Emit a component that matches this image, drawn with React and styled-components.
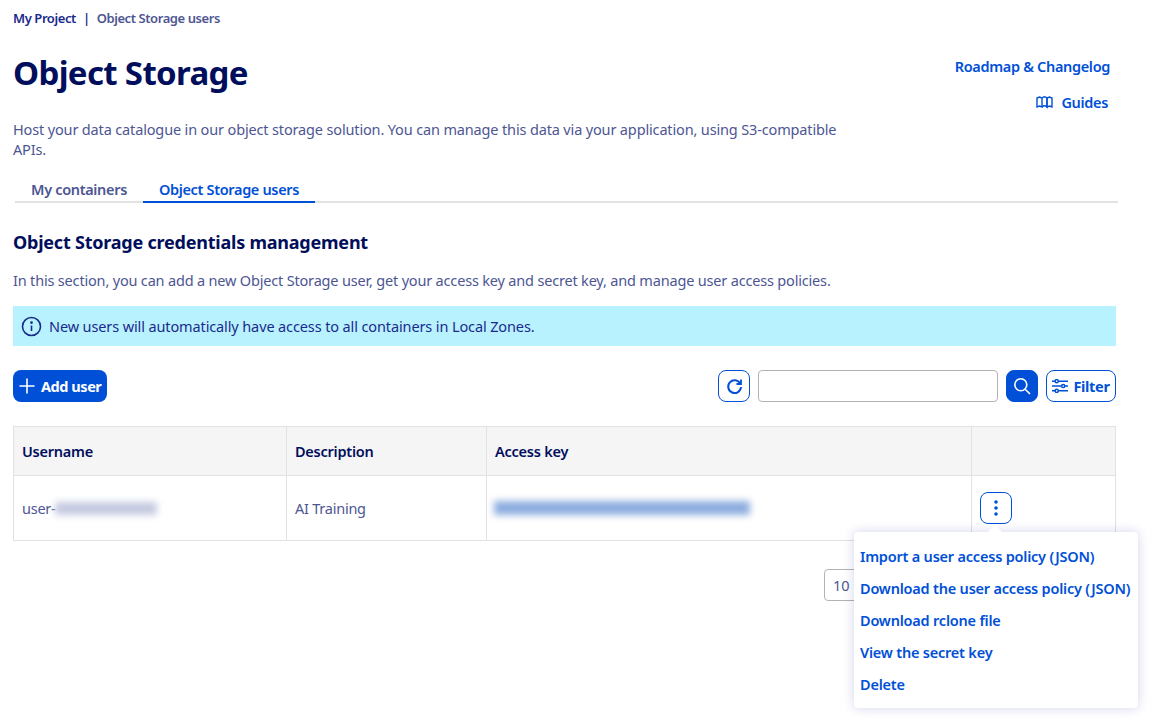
import React from "react";
import styled, { createGlobalStyle } from "styled-components";

const GlobalStyle = createGlobalStyle`
  html, body {
    margin: 0;
    padding: 0;
    background: #fff;
  }
  body {
    font-family: "Noto Sans", "Open Sans", sans-serif;
    color: #4d5693;
  }
`;

const Page = styled.div`
  position: relative;
  width: 1152px;
  height: 725px;
  overflow: hidden;
  padding: 10px 34px 0 13px;
  box-sizing: border-box;
`;

const Breadcrumb = styled.div`
  display: flex;
  align-items: center;
  height: 16px;
  font-size: 13px;
  font-weight: 600;
  letter-spacing: -0.42px;
  color: #4d5693;
`;

const Crumb = styled.span`
  color: ${(p) => (p.$root ? "#1a2a8c" : "#4d5693")};
`;

const Sep = styled.span`
  margin: 0 7px;
  color: #1a2a8c;
`;

const Header = styled.div`
  display: flex;
  justify-content: space-between;
  height: 84px;
  padding-top: 23px;
  box-sizing: border-box;
`;

const Title = styled.h1`
  margin: 0;
  font-size: 33px;
  line-height: 48px;
  font-weight: 700;
  letter-spacing: -0.65px;
  color: #000e5c;
`;

const HeaderLinks = styled.div`
  display: flex;
  flex-direction: column;
  align-items: flex-end;
  gap: 16px;
  padding: 7px 8px 0 0;
`;

const HeaderLink = styled.a`
  display: flex;
  align-items: center;
  gap: 8px;
  height: 20px;
  font-size: 14.5px;
  font-weight: 600;
  letter-spacing: -0.33px;
  color: #0050d7;
  margin-right: ${(p) => p.$inset || 0}px;
`;

const Intro = styled.p`
  margin: 9px 0 0;
  width: 830px;
  font-size: 14.5px;
  line-height: 20px;
  letter-spacing: -0.15px;
`;

const Tabs = styled.div`
  display: flex;
  width: 1103px;
  height: 30px;
  margin-top: 14px;
  margin-left: 2px;
  border-bottom: 2px solid #e2e2e2;
  box-sizing: border-box;
`;

const Tab = styled.div`
  display: flex;
  align-items: flex-end;
  justify-content: center;
  width: ${(p) => p.$w}px;
  height: 30px;
  padding-bottom: 2px;
  box-sizing: border-box;
  font-size: 14.5px;
  line-height: 20px;
  font-weight: 600;
  letter-spacing: -0.34px;
  color: ${(p) => (p.$active ? "#0050d7" : "#4d5693")};
  border-bottom: 2px solid ${(p) => (p.$active ? "#0050d7" : "transparent")};
`;

const SectionTitle = styled.h2`
  margin: 26px 0 0;
  font-size: 18px;
  line-height: 26px;
  font-weight: 700;
  letter-spacing: -0.22px;
  color: #000e5c;
`;

const SectionText = styled.p`
  margin: 15px 0 0;
  font-size: 14.5px;
  line-height: 20px;
  letter-spacing: -0.18px;
`;

const Banner = styled.div`
  display: flex;
  align-items: center;
  gap: 7px;
  width: 1103px;
  height: 40px;
  margin-top: 16px;
  padding-left: 8px;
  box-sizing: border-box;
  background: #b8f2ff;
  color: #1a2a8c;
  font-size: 14.5px;
  letter-spacing: -0.12px;
`;

const Toolbar = styled.div`
  display: flex;
  align-items: center;
  width: 1103px;
  height: 32px;
  margin-top: 24px;
`;

const AddButton = styled.button`
  display: flex;
  align-items: center;
  gap: 6px;
  height: 32px;
  width: 94px;
  padding: 0 0 0 6px;
  border: 0;
  border-radius: 8px;
  background: #0050d7;
  color: #fff;
  font-family: inherit;
  font-size: 14.5px;
  font-weight: 700;
  letter-spacing: -0.45px;
`;

const Spacer = styled.div`
  flex: 1;
`;

const IconButton = styled.button`
  display: flex;
  align-items: center;
  justify-content: center;
  gap: 5px;
  width: ${(p) => p.$w || 32}px;
  height: 32px;
  padding: 0;
  box-sizing: border-box;
  border: 1px solid #0050d7;
  border-radius: 8px;
  background: ${(p) => (p.$solid ? "#0050d7" : "#fff")};
  color: ${(p) => (p.$solid ? "#fff" : "#0050d7")};
  font-family: inherit;
  font-size: 14.5px;
  font-weight: 700;
  letter-spacing: -0.3px;
`;

const SearchInput = styled.input`
  width: 240px;
  height: 32px;
  margin: 0 8px;
  box-sizing: border-box;
  border: 1px solid #b3b3b3;
  border-radius: 4px;
  background: #fff;
`;

const FilterGap = styled.div`
  width: 8px;
`;

const Table = styled.div`
  width: 1103px;
  margin-top: 24px;
  border: 1px solid #e2e2e2;
  box-sizing: border-box;
`;

const Row = styled.div`
  display: grid;
  grid-template-columns: 273px 200px 485px 1fr;
  height: ${(p) => p.$h}px;
  background: ${(p) => p.$bg || "#fff"};
  border-bottom: ${(p) => (p.$head ? "1px solid #e2e2e2" : "0")};
  box-sizing: border-box;
`;

const Cell = styled.div`
  display: flex;
  align-items: center;
  padding-left: 8px;
  border-right: ${(p) => (p.$last ? "0" : "1px solid #e2e2e2")};
  font-size: 14.5px;
  letter-spacing: -0.24px;
  font-weight: ${(p) => (p.$head ? 600 : 400)};
  color: ${(p) => (p.$head ? "#000e5c" : "#4d5693")};
`;

const BlurredName = styled.span`
  display: inline-block;
  width: 102px;
  height: 13px;
  margin-left: -1px;
  background: #c5c9e0;
  border-radius: 3px;
  filter: blur(3.5px);
`;

const BlurredKey = styled.span`
  display: inline-block;
  width: 256px;
  height: 14px;
  margin-left: -1px;
  background: #8daddf;
  filter: blur(3.5px);
`;

const ActionCell = styled(Cell)`
  padding-left: 8px;
`;

const Pagination = styled.div`
  display: flex;
  justify-content: flex-start;
  width: 1103px;
  margin-top: 28px;
  padding-left: 811px;
  box-sizing: border-box;
`;

const PageSelect = styled.div`
  display: flex;
  align-items: center;
  width: 60px;
  height: 32px;
  padding-left: 8px;
  box-sizing: border-box;
  border: 1px solid #b3b3b3;
  border-radius: 4px;
  font-size: 14.5px;
`;

const Menu = styled.div`
  position: absolute;
  left: 854px;
  top: 532px;
  width: 284px;
  height: 176px;
  padding: 8px 6px;
  box-sizing: border-box;
  background: #fff;
  border-radius: 4px;
  box-shadow: 0 0 12px rgba(0, 14, 156, 0.18);

  &::before {
    content: "";
    position: absolute;
    top: -5px;
    left: 136px;
    width: 10px;
    height: 10px;
    background: #fff;
    transform: rotate(45deg);
  }
`;

const MenuItem = styled.a`
  display: flex;
  align-items: center;
  height: 32px;
  font-size: 14.5px;
  font-weight: 600;
  letter-spacing: -0.21px;
  white-space: nowrap;
  color: #0050d7;
`;

const menuItems = [
  "Import a user access policy (JSON)",
  "Download the user access policy (JSON)",
  "Download rclone file",
  "View the secret key",
  "Delete",
];

function App() {
  return (
    <Page>
      <GlobalStyle />
      <Breadcrumb>
        <Crumb $root>My Project</Crumb>
        <Sep>|</Sep>
        <Crumb>Object Storage users</Crumb>
      </Breadcrumb>

      <Header>
        <Title>Object Storage</Title>
        <HeaderLinks>
          <HeaderLink>Roadmap &amp; Changelog</HeaderLink>
          <HeaderLink $inset={2}>
            <svg width="17" height="14" viewBox="0 0 17 14" fill="none" stroke="currentColor" strokeWidth="1.4">
              <path d="M1 3 L3.5 2 L6 3 V12 L3.5 11 L1 12 Z" />
              <path d="M6 3 Q8.5 0.5 11 3 V12 Q8.5 9.5 6 12" />
              <path d="M11 3 L13.5 2 L16 3 V12 L13.5 11 L11 12 Z" />
            </svg>
            Guides
          </HeaderLink>
        </HeaderLinks>
      </Header>

      <Intro>
        Host your data catalogue in our object storage solution. You can manage this data via your application, using S3-compatible APIs.
      </Intro>

      <Tabs>
        <Tab $w={128}>My containers</Tab>
        <Tab $w={172} $active>Object Storage users</Tab>
      </Tabs>

      <SectionTitle>Object Storage credentials management</SectionTitle>
      <SectionText>
        In this section, you can add a new Object Storage user, get your access key and secret key, and manage user access policies.
      </SectionText>

      <Banner>
        <svg width="21" height="21" viewBox="0 0 21 21" fill="none" stroke="#1a2a8c" strokeWidth="1.6">
          <circle cx="10.5" cy="10.5" r="9" />
          <path d="M10.5 9.5 V15" />
          <circle cx="10.5" cy="6.6" r="0.6" fill="#1a2a8c" />
        </svg>
        New users will automatically have access to all containers in Local Zones.
      </Banner>

      <Toolbar>
        <AddButton>
          <svg width="16" height="16" viewBox="0 0 16 16" stroke="currentColor" strokeWidth="1.6">
            <path d="M8 0.5 V15.5 M0.5 8 H15.5" />
          </svg>
          Add user
        </AddButton>
        <Spacer />
        <IconButton>
          <svg width="17" height="17" viewBox="0 0 17 17" fill="none" stroke="currentColor" strokeWidth="2">
            <path d="M14.2 5.5 A6.4 6.4 0 1 0 15 9" />
            <path d="M15 1.5 V6 H10.5" strokeWidth="1.8" />
          </svg>
        </IconButton>
        <SearchInput />
        <IconButton $solid>
          <svg width="18" height="18" viewBox="0 0 18 18" fill="none" stroke="currentColor" strokeWidth="1.6">
            <circle cx="7.8" cy="7.8" r="6" />
            <path d="M12.2 12.2 L17 17" />
          </svg>
        </IconButton>
        <FilterGap />
        <IconButton $w={70}>
          <svg width="16" height="14" viewBox="0 0 16 14" fill="none" stroke="currentColor" strokeWidth="1.5">
            <path d="M0 2.2 H3 M6.5 2.2 H16 M0 7 H9.5 M13 7 H16 M0 11.8 H3 M6.5 11.8 H16" />
            <circle cx="4.7" cy="2.2" r="1.6" />
            <circle cx="11.2" cy="7" r="1.6" />
            <circle cx="4.7" cy="11.8" r="1.6" />
          </svg>
          Filter
        </IconButton>
      </Toolbar>

      <Table>
        <Row $h={49} $bg="#f5f5f5" $head>
          <Cell $head>Username</Cell>
          <Cell $head>Description</Cell>
          <Cell $head>Access key</Cell>
          <Cell $head $last />
        </Row>
        <Row $h={64}>
          <Cell>
            user-
            <BlurredName />
          </Cell>
          <Cell>AI Training</Cell>
          <Cell>
            <BlurredKey />
          </Cell>
          <ActionCell $last>
            <IconButton>
              <svg width="4" height="16" viewBox="0 0 4 16" fill="currentColor">
                <circle cx="2" cy="2" r="1.8" />
                <circle cx="2" cy="8" r="1.8" />
                <circle cx="2" cy="14" r="1.8" />
              </svg>
            </IconButton>
          </ActionCell>
        </Row>
      </Table>

      <Pagination>
        <PageSelect>10</PageSelect>
      </Pagination>

      <Menu>
        {menuItems.map((item) => (
          <MenuItem key={item}>{item}</MenuItem>
        ))}
      </Menu>
    </Page>
  );
}

export default App;
